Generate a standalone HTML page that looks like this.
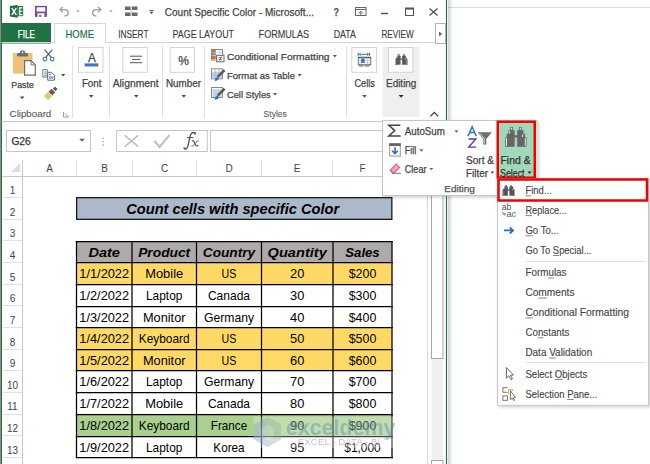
<!DOCTYPE html>
<html><head><meta charset="utf-8"><style>
html,body{margin:0;padding:0;background:#fff;overflow:hidden}
svg{display:block;font-family:"Liberation Sans",sans-serif}
</style></head><body>
<svg width="650" height="464" viewBox="0 0 650 464">
<defs>
<linearGradient id="shadowR" x1="0" x2="1" y1="0" y2="0"><stop offset="0" stop-color="#000" stop-opacity="0.18"/><stop offset="1" stop-color="#000" stop-opacity="0"/></linearGradient>
<filter id="sh" x="-10%" y="-10%" width="130%" height="130%"><feDropShadow dx="1.5" dy="1.5" stdDeviation="1.5" flood-color="#000" flood-opacity="0.18"/></filter>
</defs>
<rect x="0" y="0" width="650" height="464" fill="#ffffff" />
<rect x="0" y="0" width="1" height="464" fill="#8a8f86" />
<line x1="1.5" y1="0" x2="1.5" y2="464" stroke="#217346" stroke-width="1" />
<line x1="448" y1="7.5" x2="650" y2="7.5" stroke="#dcdcdc" stroke-width="1" />
<rect x="448" y="0" width="5" height="464" fill="url(#shadowR)" />
<line x1="446.5" y1="0" x2="446.5" y2="464" stroke="#217346" stroke-width="1.2" />
<path d="M9.9,6 L17.8,4.9 L17.8,17.7 L9.9,16.6 Z" fill="#1e7145" />
<rect x="17.8" y="6" width="5.4" height="10.2" fill="#2a7d50" />
<rect x="19.2" y="7.2" width="1.1" height="8" fill="#ffffff" />
<rect x="19.2" y="7.4" width="3.2" height="1.0" fill="#ffffff" />
<rect x="19.2" y="10.8" width="3.2" height="1.0" fill="#ffffff" />
<rect x="19.2" y="14.2" width="3.2" height="1.0" fill="#ffffff" />
<path d="M11.8,8.2 L16.3,14.8 M16.3,8.2 L11.8,14.8" fill="none" stroke="#fff" stroke-width="1.5" />
<rect x="35" y="5.9" width="11.9" height="11" fill="#7e3fa6" />
<rect x="36.6" y="7.3" width="8.7" height="4.3" fill="#ffffff" />
<rect x="37.4" y="13.2" width="7.1" height="3.7" fill="#ffffff" />
<rect x="39.2" y="14.9" width="1.9" height="2.0" fill="#7e3fa6" />
<path d="M61,9.6 L64.8,9.6 C67.6,9.6 68.2,11.4 68.2,12.8 C68.2,14.6 66.8,16 64.4,16" fill="none" stroke="#9a9a9a" stroke-width="1.3" />
<path d="M62.8,6.9 L60,9.6 L62.8,12.3" fill="none" stroke="#9a9a9a" stroke-width="1.3" />
<path d="M76.30,10.30 L79.70,10.30 L78.00,12.52 Z" fill="#a8a8a8" />
<path d="M99.8,9.6 L96,9.6 C93.2,9.6 92.6,11.4 92.6,12.8 C92.6,14.6 94,16 96.4,16" fill="none" stroke="#9a9a9a" stroke-width="1.3" />
<path d="M98,6.9 L100.8,9.6 L98,12.3" fill="none" stroke="#9a9a9a" stroke-width="1.3" />
<path d="M109.30,10.30 L112.70,10.30 L111.00,12.52 Z" fill="#a8a8a8" />
<rect x="125" y="6.5" width="5.5" height="3.5" fill="#6b6b6b" />
<rect x="132" y="6.5" width="5.5" height="3.5" fill="#6b6b6b" />
<rect x="125" y="12.5" width="5.5" height="3.5" fill="#6b6b6b" />
<rect x="132" y="12.5" width="5.5" height="3.5" fill="#6b6b6b" />
<line x1="131.2" y1="6" x2="131.2" y2="16.5" stroke="#9a9a9a" stroke-width="0.6" />
<line x1="149.5" y1="10.5" x2="153.5" y2="10.5" stroke="#555" stroke-width="1" />
<path d="M149.50,11.80 L153.50,11.80 L151.50,14.20 Z" fill="#555" />
<text x="164.8" y="16.2" font-size="11" fill="#444" stroke="#444" stroke-width="0.25" textLength="149.2" lengthAdjust="spacingAndGlyphs" >Count Specific Color - Microsoft...</text>
<text x="333.5" y="16.0" font-size="11" fill="#555" stroke="#555" stroke-width="0.25" textLength="5.5" lengthAdjust="spacingAndGlyphs" font-weight="bold">?</text>
<rect x="355.5" y="7.5" width="10.5" height="8" fill="none" stroke="#666" stroke-width="1" />
<line x1="355.5" y1="9.5" x2="366" y2="9.5" stroke="#666" stroke-width="1" />
<path d="M358.5,13.5 L360.8,11.3 L363,13.5 M360.8,11.3 L360.8,15.5" fill="none" stroke="#666" stroke-width="1" />
<line x1="381" y1="13.5" x2="388" y2="13.5" stroke="#555" stroke-width="1.5" />
<rect x="405.5" y="8" width="8" height="7.5" fill="none" stroke="#555" stroke-width="1" />
<line x1="405.5" y1="8.8" x2="413.5" y2="8.8" stroke="#555" stroke-width="1.6" />
<path d="M429.5,8.5 L437.5,15.5 M437.5,8.5 L429.5,15.5" fill="none" stroke="#555" stroke-width="1.4" />
<rect x="1.5" y="23" width="49.5" height="20.5" fill="#217346" />
<text x="17.7" y="37.5" font-size="10.2" fill="#ffffff" stroke="#ffffff" stroke-width="0.25" textLength="17.4" lengthAdjust="spacingAndGlyphs" >FILE</text>
<path d="M54.5,42.5 L54.5,23.5 L105.5,23.5 L105.5,42.5" fill="none" stroke="#d4d4d4" stroke-width="1" />
<text x="65.4" y="37.5" font-size="10.2" fill="#1d6b3c" stroke="#1d6b3c" stroke-width="0.12" textLength="28.6" lengthAdjust="spacingAndGlyphs" >HOME</text>
<text x="118.3" y="37.5" font-size="10.2" fill="#3a3a3a" stroke="#3a3a3a" stroke-width="0.12" textLength="30.2" lengthAdjust="spacingAndGlyphs" >INSERT</text>
<text x="172.5" y="37.5" font-size="10.2" fill="#3a3a3a" stroke="#3a3a3a" stroke-width="0.12" textLength="61.5" lengthAdjust="spacingAndGlyphs" >PAGE LAYOUT</text>
<text x="258.6" y="37.5" font-size="10.2" fill="#3a3a3a" stroke="#3a3a3a" stroke-width="0.12" textLength="50.4" lengthAdjust="spacingAndGlyphs" >FORMULAS</text>
<text x="333.7" y="37.5" font-size="10.2" fill="#3a3a3a" stroke="#3a3a3a" stroke-width="0.12" textLength="22.3" lengthAdjust="spacingAndGlyphs" >DATA</text>
<text x="381.4" y="37.5" font-size="10.2" fill="#3a3a3a" stroke="#3a3a3a" stroke-width="0.12" textLength="32.3" lengthAdjust="spacingAndGlyphs" >REVIEW</text>
<line x1="1.5" y1="42.5" x2="54.5" y2="42.5" stroke="#d4d4d4" stroke-width="1" />
<line x1="105.5" y1="42.5" x2="446" y2="42.5" stroke="#d4d4d4" stroke-width="1" />
<rect x="435.5" y="23.5" width="10" height="20" fill="#fff" stroke="#b4b4b4" stroke-width="1" />
<path d="M439,31.6 L442.2,34 L439,36.4 Z" fill="#666" />
<line x1="1.5" y1="121.5" x2="446" y2="121.5" stroke="#c8c8c8" stroke-width="1" />
<rect x="12.8" y="52.9" width="19.7" height="20.7" fill="#ebc27a" />
<rect x="17" y="53" width="11" height="3.4" rx="1" fill="#6d6d6d"/>
<rect x="20" y="50.6" width="5" height="3.5" rx="1.5" fill="#6d6d6d"/>
<circle cx="22.5" cy="52.4" r="0.8" fill="#fff"/>
<path d="M24.6,60.7 L31.1,60.7 L35.3,64.9 L35.3,75.1 L24.6,75.1 Z" fill="#fff" stroke="#6d6d6d" stroke-width="1.2" />
<path d="M31.1,60.7 L31.1,64.9 L35.3,64.9" fill="none" stroke="#6d6d6d" stroke-width="0.9" />
<text x="11.3" y="88.0" font-size="9" fill="#444" stroke="#444" stroke-width="0.25" textLength="22.5" lengthAdjust="spacingAndGlyphs" >Paste</text>
<path d="M19.90,96.60 L24.50,96.60 L22.20,99.18 Z" fill="#505050" />
<path d="M44.6,49.6 L51.3,57.3 M52.3,49.6 L45.6,57.3" fill="none" stroke="#555" stroke-width="1.1" />
<circle cx="44.9" cy="59.1" r="1.8" fill="none" stroke="#2e75b6" stroke-width="1.1"/>
<circle cx="52.1" cy="59.1" r="1.8" fill="none" stroke="#2e75b6" stroke-width="1.1"/>
<path d="M42.8,69.6 L47.3,69.6 L47.3,77.1 L42.8,77.1 Z" fill="#fff" stroke="#777" stroke-width="1" />
<line x1="44.2" y1="73.2" x2="46.5" y2="73.2" stroke="#2e75b6" stroke-width="0.9" />
<line x1="44.2" y1="75.3" x2="46.5" y2="75.3" stroke="#2e75b6" stroke-width="0.9" />
<line x1="44.2" y1="71.5" x2="46.5" y2="71.5" stroke="#9cc3e6" stroke-width="0.9" />
<path d="M47.7,72.3 L51.2,72.3 L54.4,75.2 L54.4,80.2 L47.7,80.2 Z" fill="#fff" stroke="#666" stroke-width="1" />
<line x1="49" y1="74.3" x2="51" y2="74.3" stroke="#2e75b6" stroke-width="0.9" />
<rect x="49" y="76.3" width="4.5" height="2.5" fill="#7fa9d8" />
<path d="M61.00,74.10 L65.20,74.10 L63.10,76.56 Z" fill="#444" />
<g transform="translate(46,98) rotate(-45)"><rect x="0" y="-3" width="5.6" height="6" fill="#ebc075"/><rect x="6.1" y="-2.7" width="4.4" height="5.4" fill="#606060"/><rect x="11.4" y="-1.8" width="3.2" height="3.6" fill="#606060"/></g>
<text x="9.6" y="117.0" font-size="9.2" fill="#5a5a5a" stroke="#5a5a5a" stroke-width="0.1" textLength="41.7" lengthAdjust="spacingAndGlyphs" >Clipboard</text>
<path d="M63.5,112 L63.5,117 L68.5,117" fill="none" stroke="#888" stroke-width="0.8" />
<path d="M65,113.5 L68.5,117" fill="none" stroke="#888" stroke-width="0.8" />
<line x1="72.5" y1="46" x2="72.5" y2="118" stroke="#e1e1e1" stroke-width="1" />
<rect x="78.5" y="47.5" width="24.5" height="24.8" fill="#fff" stroke="#d4d4d4" stroke-width="1" />
<text x="88.0" y="62.3" font-size="12.4" fill="#444" stroke="#444" stroke-width="0.25" textLength="7.8" lengthAdjust="spacingAndGlyphs" >A</text>
<rect x="84.7" y="63.4" width="13.6" height="3.1" fill="#3a78c4" />
<text x="81.9" y="86.6" font-size="10.4" fill="#444" stroke="#444" stroke-width="0.25" textLength="19.6" lengthAdjust="spacingAndGlyphs" >Font</text>
<path d="M88.90,95.10 L93.50,95.10 L91.20,97.68 Z" fill="#505050" />
<line x1="109.5" y1="46" x2="109.5" y2="118" stroke="#e1e1e1" stroke-width="1" />
<rect x="122.8" y="47.5" width="24.5" height="24.8" fill="#fff" stroke="#d4d4d4" stroke-width="1" />
<line x1="130" y1="56.2" x2="142.2" y2="56.2" stroke="#555" stroke-width="1" />
<line x1="132" y1="59.4" x2="140.2" y2="59.4" stroke="#555" stroke-width="1" />
<line x1="130" y1="62.7" x2="142.2" y2="62.7" stroke="#555" stroke-width="1" />
<text x="112.7" y="86.6" font-size="10.4" fill="#444" stroke="#444" stroke-width="0.25" textLength="45.9" lengthAdjust="spacingAndGlyphs" >Alignment</text>
<path d="M134.00,95.10 L138.60,95.10 L136.30,97.68 Z" fill="#505050" />
<line x1="162.5" y1="46" x2="162.5" y2="118" stroke="#e1e1e1" stroke-width="1" />
<rect x="170.2" y="47.5" width="24.3" height="24.8" fill="#fff" stroke="#d4d4d4" stroke-width="1" />
<text x="178.3" y="64.9" font-size="12.8" fill="#444" stroke="#444" stroke-width="0.25" textLength="10.7" lengthAdjust="spacingAndGlyphs" >%</text>
<text x="165.9" y="86.6" font-size="10.4" fill="#444" stroke="#444" stroke-width="0.25" textLength="35.1" lengthAdjust="spacingAndGlyphs" >Number</text>
<path d="M181.50,95.10 L186.10,95.10 L183.80,97.68 Z" fill="#505050" />
<line x1="204.5" y1="46" x2="204.5" y2="118" stroke="#e1e1e1" stroke-width="1" />
<rect x="211.5" y="49.5" width="11" height="10.5" fill="#fff" stroke="#8a8a8a" stroke-width="1" />
<rect x="212" y="50" width="3.8" height="2.6" fill="#e46c0a" />
<rect x="212" y="52.9" width="3.8" height="2.6" fill="#5b9bd5" />
<rect x="212" y="55.8" width="3.8" height="3.2" fill="#e46c0a" />
<line x1="216.5" y1="52.7" x2="222.5" y2="52.7" stroke="#ccc" stroke-width="0.7" />
<line x1="219.5" y1="49.5" x2="219.5" y2="55" stroke="#ccc" stroke-width="0.7" />
<rect x="216.6" y="55.3" width="7.4" height="6.5" fill="#fff" stroke="#666" stroke-width="1" />
<line x1="218.6" y1="57.6" x2="222.2" y2="57.6" stroke="#555" stroke-width="0.8" />
<line x1="218.6" y1="59.6" x2="222.2" y2="59.6" stroke="#555" stroke-width="0.8" />
<line x1="221.4" y1="56.6" x2="219.4" y2="60.8" stroke="#555" stroke-width="0.8" />
<text x="227.0" y="60.0" font-size="9.5" fill="#444" stroke="#444" stroke-width="0.25" textLength="102.5" lengthAdjust="spacingAndGlyphs" >Conditional Formatting</text>
<path d="M332.80,55.00 L336.80,55.00 L334.80,57.40 Z" fill="#555" />
<rect x="211.5" y="68.8" width="11" height="10" fill="#fff" stroke="#8a8a8a" stroke-width="1" />
<rect x="212" y="72.3" width="10" height="6" fill="#bdd7ee" />
<line x1="215.2" y1="68.8" x2="215.2" y2="78.8" stroke="#aaa" stroke-width="0.6" />
<line x1="218.8" y1="68.8" x2="218.8" y2="78.8" stroke="#aaa" stroke-width="0.6" />
<line x1="211.5" y1="72.1" x2="222.5" y2="72.1" stroke="#aaa" stroke-width="0.6" />
<line x1="211.5" y1="75.3" x2="222.5" y2="75.3" stroke="#aaa" stroke-width="0.6" />
<path d="M224.6,70.1 L217.6,76.89999999999999" fill="none" stroke="#5a5a5a" stroke-width="2.6" />
<path d="M214.6,80.89999999999999 C215,78.5 216,76.89999999999999 217.6,77.2 L218.8,78.3 C219,80.1 216.8,80.89999999999999 214.6,80.89999999999999 Z" fill="#2e75b6" />
<text x="227.0" y="78.9" font-size="9.8" fill="#444" stroke="#444" stroke-width="0.25" textLength="68.0" lengthAdjust="spacingAndGlyphs" >Format as Table</text>
<path d="M297.60,74.10 L301.60,74.10 L299.60,76.50 Z" fill="#555" />
<rect x="211.5" y="87.5" width="11" height="10" fill="#fff" stroke="#8a8a8a" stroke-width="1" />
<rect x="212.5" y="90.2" width="9" height="6.8" fill="#bdd7ee" />
<line x1="211.5" y1="89.8" x2="222.5" y2="89.8" stroke="#aaa" stroke-width="0.6" />
<path d="M224.6,88.8 L217.6,95.6" fill="none" stroke="#5a5a5a" stroke-width="2.6" />
<path d="M214.6,99.6 C215,97.2 216,95.6 217.6,95.9 L218.8,97 C219,98.8 216.8,99.6 214.6,99.6 Z" fill="#2e75b6" />
<text x="227.0" y="98.4" font-size="9.5" fill="#444" stroke="#444" stroke-width="0.25" textLength="43.7" lengthAdjust="spacingAndGlyphs" >Cell Styles</text>
<path d="M273.10,93.10 L277.10,93.10 L275.10,95.50 Z" fill="#555" />
<text x="263.6" y="117.2" font-size="9.2" fill="#5a5a5a" stroke="#5a5a5a" stroke-width="0.1" textLength="23.2" lengthAdjust="spacingAndGlyphs" >Styles</text>
<line x1="346.5" y1="46" x2="346.5" y2="118" stroke="#e1e1e1" stroke-width="1" />
<rect x="351.8" y="47.5" width="24.8" height="24.8" fill="#fff" stroke="#d4d4d4" stroke-width="1" />
<path d="M358.2,52.6 L358.2,56 M369.4,52.6 L369.4,56 M359.2,54.3 L368.4,54.3" fill="none" stroke="#2e75b6" stroke-width="1" />
<path d="M360.6,53 L359.2,54.3 L360.6,55.6 M367,53 L368.4,54.3 L367,55.6" fill="none" stroke="#2e75b6" stroke-width="0.9" />
<rect x="358.3" y="57.3" width="12.4" height="7.4" fill="#fff" stroke="#666" stroke-width="1" />
<line x1="358.3" y1="57.6" x2="370.7" y2="57.6" stroke="#555" stroke-width="1.4" />
<line x1="358.3" y1="60.4" x2="370.7" y2="60.4" stroke="#bbb" stroke-width="0.7" />
<line x1="358.3" y1="62.6" x2="370.7" y2="62.6" stroke="#bbb" stroke-width="0.7" />
<line x1="361.3" y1="57.3" x2="361.3" y2="64.7" stroke="#bbb" stroke-width="0.7" />
<line x1="364.5" y1="57.3" x2="364.5" y2="64.7" stroke="#bbb" stroke-width="0.7" />
<line x1="367.6" y1="57.3" x2="367.6" y2="64.7" stroke="#bbb" stroke-width="0.7" />
<rect x="361.2" y="58.6" width="3.2" height="4.2" fill="#2e75b6" />
<rect x="358.6" y="65.2" width="5" height="1.4" rx="0.7" fill="#777"/>
<rect x="364.6" y="65.2" width="5" height="1.4" rx="0.7" fill="#777"/>
<text x="354.4" y="86.6" font-size="10.4" fill="#444" stroke="#444" stroke-width="0.25" textLength="20.6" lengthAdjust="spacingAndGlyphs" >Cells</text>
<path d="M362.20,95.10 L366.80,95.10 L364.50,97.68 Z" fill="#505050" />
<rect x="382.6" y="47" width="36.8" height="70" fill="#eef0f0" />
<rect x="388.5" y="47.5" width="24.5" height="24.8" fill="#fbfbfb" stroke="#d2d2d2" stroke-width="1" />
<g transform="translate(395,54.1) scale(0.5991,0.5408)"><path fill="#5a5a5a" d="M4.8,0 H7.6 V3.1 H9.3 V19.6 H0 V10.1 H1.4 V6.7 H3.1 V3.1 H4.8 Z M16.4,0 H13.6 V3.1 H11.9 V19.6 H21.2 V10.1 H19.8 V6.7 H18.1 V3.1 H16.4 Z M9.3,8.1 H11.9 V10.4 H9.3 Z"/><path fill="#ffffff" opacity="0.85" d="M0.7,11 H1.7 V18.6 H0.7 Z M3.8,3.8 H4.8 V6.4 H3.8 Z M5.6,0.7 H6.8 V2.6 H5.6 Z M19.5,11 H20.5 V18.6 H19.5 Z M16.8,7.2 H17.8 V9.8 H16.8 Z M14.4,0.7 H15.6 V2.6 H14.4 Z"/></g>
<text x="386.0" y="86.6" font-size="10.4" fill="#444" stroke="#444" stroke-width="0.25" textLength="30.4" lengthAdjust="spacingAndGlyphs" >Editing</text>
<path d="M398.60,95.10 L403.60,95.10 L401.10,97.80 Z" fill="#2a2a2a" />
<path d="M430.5,116.2 L434.3,112.4 L438.1,116.2" fill="none" stroke="#444" stroke-width="1.3" />
<rect x="6.5" y="130.5" width="84" height="21" fill="#fff" stroke="#c6c6c6" stroke-width="1" />
<text x="11.4" y="145.2" font-size="11" fill="#333" stroke="#333" stroke-width="0.25" textLength="19.4" lengthAdjust="spacingAndGlyphs" >G26</text>
<path d="M79.20,138.80 L84.80,138.80 L82.00,141.68 Z" fill="#666" />
<rect x="102.5" y="137.5" width="1.2" height="1.2" fill="#888" />
<rect x="102.5" y="141" width="1.2" height="1.2" fill="#888" />
<rect x="102.5" y="144.5" width="1.2" height="1.2" fill="#888" />
<rect x="116.5" y="130.5" width="90.8" height="21" fill="#fff" stroke="#c6c6c6" stroke-width="1" />
<path d="M124.8,135.4 L138.2,146.6 M138.2,135.4 L124.8,146.6" fill="none" stroke="#c0c0c0" stroke-width="1.7" />
<path d="M154.5,141 L159.5,147 L169.5,135" fill="none" stroke="#c4c4c4" stroke-width="2.2" />
<path d="M195.4,133.8 C194.8,132.3 192.6,132 191.3,133.6 C190.6,134.5 190.2,136 189.8,137.6 L188.1,145.3 C187.6,147.8 186.2,149.4 184.5,148.9" fill="none" stroke="#555" stroke-width="1.35" />
<circle cx="195.1" cy="133.6" r="1.05" fill="#555"/>
<circle cx="184.4" cy="148.2" r="1.05" fill="#555"/>
<line x1="186.8" y1="137.6" x2="193.4" y2="137.6" stroke="#555" stroke-width="1.0" />
<path d="M191.8,141 C193,140.2 193.8,140.6 194.3,142 L195.6,145 C196.1,146.2 197.3,146.3 198.4,145.2" fill="none" stroke="#555" stroke-width="1.15" />
<path d="M198.8,140.6 C197.6,140.8 196.8,141.5 195.8,142.6 L193.8,145 C193.2,145.8 192.4,146.4 191.4,146" fill="none" stroke="#555" stroke-width="0.95" />
<rect x="210.5" y="130.5" width="240" height="21" fill="#fff" stroke="#c6c6c6" stroke-width="1" />
<rect x="2" y="160" width="444" height="16" fill="#fff" />
<line x1="2" y1="176.5" x2="427" y2="176.5" stroke="#c8c8c8" stroke-width="1" />
<line x1="22.5" y1="160" x2="22.5" y2="464" stroke="#c8c8c8" stroke-width="1" />
<path d="M11,172 L20,163 L20,172 Z" fill="#dcdcdc" />
<text x="49.5" y="172" font-size="10" fill="#444" text-anchor="middle">A</text>
<line x1="76.5" y1="160" x2="76.5" y2="176" stroke="#e1e1e1" stroke-width="1" />
<text x="104.5" y="172" font-size="10" fill="#444" text-anchor="middle">B</text>
<line x1="132.5" y1="160" x2="132.5" y2="176" stroke="#e1e1e1" stroke-width="1" />
<text x="164.5" y="172" font-size="10" fill="#444" text-anchor="middle">C</text>
<line x1="196.5" y1="160" x2="196.5" y2="176" stroke="#e1e1e1" stroke-width="1" />
<text x="229.0" y="172" font-size="10" fill="#444" text-anchor="middle">D</text>
<line x1="261.5" y1="160" x2="261.5" y2="176" stroke="#e1e1e1" stroke-width="1" />
<text x="297.0" y="172" font-size="10" fill="#444" text-anchor="middle">E</text>
<line x1="332.5" y1="160" x2="332.5" y2="176" stroke="#e1e1e1" stroke-width="1" />
<text x="362.5" y="172" font-size="10" fill="#444" text-anchor="middle">F</text>
<line x1="392.5" y1="160" x2="392.5" y2="176" stroke="#e1e1e1" stroke-width="1" />
<line x1="3" y1="197.5" x2="22" y2="197.5" stroke="#e1e1e1" stroke-width="1" />
<text x="12.5" y="194.0" font-size="10" fill="#444" text-anchor="middle">1</text>
<line x1="3" y1="219.5" x2="22" y2="219.5" stroke="#e1e1e1" stroke-width="1" />
<text x="12.5" y="215.6" font-size="10" fill="#444" text-anchor="middle">2</text>
<line x1="3" y1="240.5" x2="22" y2="240.5" stroke="#e1e1e1" stroke-width="1" />
<text x="12.5" y="237.3" font-size="10" fill="#444" text-anchor="middle">3</text>
<line x1="3" y1="262.5" x2="22" y2="262.5" stroke="#e1e1e1" stroke-width="1" />
<text x="12.5" y="258.9" font-size="10" fill="#444" text-anchor="middle">4</text>
<line x1="3" y1="284.5" x2="22" y2="284.5" stroke="#e1e1e1" stroke-width="1" />
<text x="12.5" y="280.6" font-size="10" fill="#444" text-anchor="middle">5</text>
<line x1="3" y1="305.5" x2="22" y2="305.5" stroke="#e1e1e1" stroke-width="1" />
<text x="12.5" y="302.2" font-size="10" fill="#444" text-anchor="middle">6</text>
<line x1="3" y1="327.5" x2="22" y2="327.5" stroke="#e1e1e1" stroke-width="1" />
<text x="12.5" y="323.8" font-size="10" fill="#444" text-anchor="middle">7</text>
<line x1="3" y1="349.5" x2="22" y2="349.5" stroke="#e1e1e1" stroke-width="1" />
<text x="12.5" y="345.5" font-size="10" fill="#444" text-anchor="middle">8</text>
<line x1="3" y1="370.5" x2="22" y2="370.5" stroke="#e1e1e1" stroke-width="1" />
<text x="12.5" y="367.1" font-size="10" fill="#444" text-anchor="middle">9</text>
<line x1="3" y1="392.5" x2="22" y2="392.5" stroke="#e1e1e1" stroke-width="1" />
<text x="12.5" y="388.8" font-size="10" fill="#444" text-anchor="middle">10</text>
<line x1="3" y1="414.5" x2="22" y2="414.5" stroke="#e1e1e1" stroke-width="1" />
<text x="12.5" y="410.4" font-size="10" fill="#444" text-anchor="middle">11</text>
<line x1="3" y1="435.5" x2="22" y2="435.5" stroke="#e1e1e1" stroke-width="1" />
<text x="12.5" y="432.0" font-size="10" fill="#444" text-anchor="middle">12</text>
<line x1="3" y1="457.5" x2="22" y2="457.5" stroke="#e1e1e1" stroke-width="1" />
<text x="12.5" y="453.7" font-size="10" fill="#444" text-anchor="middle">13</text>
<line x1="427.5" y1="176" x2="427.5" y2="464" stroke="#d8d8d8" stroke-width="1" />
<rect x="431.5" y="176" width="11.5" height="284" fill="#f0f0f0" />
<rect x="431.5" y="195" width="11.5" height="163.5" fill="#fff" stroke="#a6a6a6" stroke-width="1" />
<rect x="431.5" y="460.5" width="11.5" height="10" fill="#fff" stroke="#a6a6a6" stroke-width="1" />
<rect x="76" y="197" width="316.5" height="23" fill="#1a1a1a" />
<rect x="77.3" y="198.3" width="313.9" height="20.4" fill="#acb9ca" />
<text x="126.2" y="213.5" font-size="14.6" font-weight="bold" font-style="italic" fill="#000" textLength="213" lengthAdjust="spacingAndGlyphs">Count cells with specific Color</text>
<rect x="76.5" y="241.5" width="315.5" height="21" fill="#aeaaaa" />
<text x="104.2" y="256.9" font-size="13.2" font-weight="bold" font-style="italic" fill="#000" text-anchor="middle" textLength="31.6" lengthAdjust="spacingAndGlyphs">Date</text>
<text x="164.2" y="256.9" font-size="13.2" font-weight="bold" font-style="italic" fill="#000" text-anchor="middle" textLength="52.0" lengthAdjust="spacingAndGlyphs">Product</text>
<text x="229.0" y="256.9" font-size="13.2" font-weight="bold" font-style="italic" fill="#000" text-anchor="middle" textLength="52.3" lengthAdjust="spacingAndGlyphs">Country</text>
<text x="297.2" y="256.9" font-size="13.2" font-weight="bold" font-style="italic" fill="#000" text-anchor="middle" textLength="59.2" lengthAdjust="spacingAndGlyphs">Quantity</text>
<text x="362.5" y="256.9" font-size="13.2" font-weight="bold" font-style="italic" fill="#000" text-anchor="middle" textLength="34.4" lengthAdjust="spacingAndGlyphs">Sales</text>
<rect x="76.5" y="262.5" width="315.5" height="22" fill="#ffd966" />
<text x="104.2" y="278.2" font-size="12.9" fill="#000" text-anchor="middle" textLength="49.8" lengthAdjust="spacingAndGlyphs">1/1/2022</text>
<text x="164.2" y="278.2" font-size="12.9" fill="#000" text-anchor="middle" textLength="38.0" lengthAdjust="spacingAndGlyphs">Mobile</text>
<text x="229.0" y="278.2" font-size="12.9" fill="#000" text-anchor="middle" textLength="14.8" lengthAdjust="spacingAndGlyphs">US</text>
<text x="297.2" y="278.2" font-size="12.9" fill="#000" text-anchor="middle" textLength="14.3" lengthAdjust="spacingAndGlyphs">20</text>
<text x="362.5" y="278.2" font-size="12.9" fill="#000" text-anchor="middle" textLength="27.6" lengthAdjust="spacingAndGlyphs">$200</text>
<rect x="76.5" y="284.5" width="315.5" height="22" fill="#ffffff" />
<text x="104.2" y="300.2" font-size="12.9" fill="#000" text-anchor="middle" textLength="49.8" lengthAdjust="spacingAndGlyphs">1/2/2022</text>
<text x="164.2" y="300.2" font-size="12.9" fill="#000" text-anchor="middle" textLength="36.4" lengthAdjust="spacingAndGlyphs">Laptop</text>
<text x="229.0" y="300.2" font-size="12.9" fill="#000" text-anchor="middle" textLength="42.1" lengthAdjust="spacingAndGlyphs">Canada</text>
<text x="297.2" y="300.2" font-size="12.9" fill="#000" text-anchor="middle" textLength="14.3" lengthAdjust="spacingAndGlyphs">30</text>
<text x="362.5" y="300.2" font-size="12.9" fill="#000" text-anchor="middle" textLength="27.6" lengthAdjust="spacingAndGlyphs">$300</text>
<rect x="76.5" y="306.5" width="315.5" height="21" fill="#ffffff" />
<text x="104.2" y="322.2" font-size="12.9" fill="#000" text-anchor="middle" textLength="49.8" lengthAdjust="spacingAndGlyphs">1/3/2022</text>
<text x="164.2" y="322.2" font-size="12.9" fill="#000" text-anchor="middle" textLength="42.6" lengthAdjust="spacingAndGlyphs">Monitor</text>
<text x="229.0" y="322.2" font-size="12.9" fill="#000" text-anchor="middle" textLength="50.0" lengthAdjust="spacingAndGlyphs">Germany</text>
<text x="297.2" y="322.2" font-size="12.9" fill="#000" text-anchor="middle" textLength="14.3" lengthAdjust="spacingAndGlyphs">40</text>
<text x="362.5" y="322.2" font-size="12.9" fill="#000" text-anchor="middle" textLength="27.6" lengthAdjust="spacingAndGlyphs">$400</text>
<rect x="76.5" y="327.5" width="315.5" height="22" fill="#ffd966" />
<text x="104.2" y="343.2" font-size="12.9" fill="#000" text-anchor="middle" textLength="49.8" lengthAdjust="spacingAndGlyphs">1/4/2022</text>
<text x="164.2" y="343.2" font-size="12.9" fill="#000" text-anchor="middle" textLength="50.9" lengthAdjust="spacingAndGlyphs">Keyboard</text>
<text x="229.0" y="343.2" font-size="12.9" fill="#000" text-anchor="middle" textLength="14.8" lengthAdjust="spacingAndGlyphs">US</text>
<text x="297.2" y="343.2" font-size="12.9" fill="#000" text-anchor="middle" textLength="14.3" lengthAdjust="spacingAndGlyphs">50</text>
<text x="362.5" y="343.2" font-size="12.9" fill="#000" text-anchor="middle" textLength="27.6" lengthAdjust="spacingAndGlyphs">$500</text>
<rect x="76.5" y="349.5" width="315.5" height="21" fill="#ffd966" />
<text x="104.2" y="365.2" font-size="12.9" fill="#000" text-anchor="middle" textLength="49.8" lengthAdjust="spacingAndGlyphs">1/5/2022</text>
<text x="164.2" y="365.2" font-size="12.9" fill="#000" text-anchor="middle" textLength="42.6" lengthAdjust="spacingAndGlyphs">Monitor</text>
<text x="229.0" y="365.2" font-size="12.9" fill="#000" text-anchor="middle" textLength="14.8" lengthAdjust="spacingAndGlyphs">US</text>
<text x="297.2" y="365.2" font-size="12.9" fill="#000" text-anchor="middle" textLength="14.3" lengthAdjust="spacingAndGlyphs">60</text>
<text x="362.5" y="365.2" font-size="12.9" fill="#000" text-anchor="middle" textLength="27.6" lengthAdjust="spacingAndGlyphs">$600</text>
<rect x="76.5" y="370.5" width="315.5" height="22" fill="#ffffff" />
<text x="104.2" y="386.2" font-size="12.9" fill="#000" text-anchor="middle" textLength="49.8" lengthAdjust="spacingAndGlyphs">1/6/2022</text>
<text x="164.2" y="386.2" font-size="12.9" fill="#000" text-anchor="middle" textLength="36.4" lengthAdjust="spacingAndGlyphs">Laptop</text>
<text x="229.0" y="386.2" font-size="12.9" fill="#000" text-anchor="middle" textLength="50.0" lengthAdjust="spacingAndGlyphs">Germany</text>
<text x="297.2" y="386.2" font-size="12.9" fill="#000" text-anchor="middle" textLength="14.3" lengthAdjust="spacingAndGlyphs">70</text>
<text x="362.5" y="386.2" font-size="12.9" fill="#000" text-anchor="middle" textLength="27.6" lengthAdjust="spacingAndGlyphs">$700</text>
<rect x="76.5" y="392.5" width="315.5" height="22" fill="#ffffff" />
<text x="104.2" y="408.2" font-size="12.9" fill="#000" text-anchor="middle" textLength="49.8" lengthAdjust="spacingAndGlyphs">1/7/2022</text>
<text x="164.2" y="408.2" font-size="12.9" fill="#000" text-anchor="middle" textLength="38.0" lengthAdjust="spacingAndGlyphs">Mobile</text>
<text x="229.0" y="408.2" font-size="12.9" fill="#000" text-anchor="middle" textLength="42.1" lengthAdjust="spacingAndGlyphs">Canada</text>
<text x="297.2" y="408.2" font-size="12.9" fill="#000" text-anchor="middle" textLength="14.3" lengthAdjust="spacingAndGlyphs">80</text>
<text x="362.5" y="408.2" font-size="12.9" fill="#000" text-anchor="middle" textLength="27.6" lengthAdjust="spacingAndGlyphs">$800</text>
<rect x="76.5" y="414.5" width="315.5" height="22" fill="#a9d08e" />
<text x="104.2" y="430.2" font-size="12.9" fill="#000" text-anchor="middle" textLength="49.8" lengthAdjust="spacingAndGlyphs">1/8/2022</text>
<text x="164.2" y="430.2" font-size="12.9" fill="#000" text-anchor="middle" textLength="50.9" lengthAdjust="spacingAndGlyphs">Keyboard</text>
<text x="229.0" y="430.2" font-size="12.9" fill="#000" text-anchor="middle" textLength="36.3" lengthAdjust="spacingAndGlyphs">France</text>
<text x="297.2" y="430.2" font-size="12.9" fill="#000" text-anchor="middle" textLength="14.3" lengthAdjust="spacingAndGlyphs">90</text>
<text x="362.5" y="430.2" font-size="12.9" fill="#000" text-anchor="middle" textLength="27.6" lengthAdjust="spacingAndGlyphs">$900</text>
<rect x="76.5" y="436.5" width="315.5" height="21" fill="#ffffff" />
<text x="104.2" y="452.2" font-size="12.9" fill="#000" text-anchor="middle" textLength="49.8" lengthAdjust="spacingAndGlyphs">1/9/2022</text>
<text x="164.2" y="452.2" font-size="12.9" fill="#000" text-anchor="middle" textLength="36.4" lengthAdjust="spacingAndGlyphs">Laptop</text>
<text x="229.0" y="452.2" font-size="12.9" fill="#000" text-anchor="middle" textLength="31.3" lengthAdjust="spacingAndGlyphs">Korea</text>
<text x="297.2" y="452.2" font-size="12.9" fill="#000" text-anchor="middle" textLength="14.3" lengthAdjust="spacingAndGlyphs">95</text>
<text x="362.5" y="452.2" font-size="12.9" fill="#000" text-anchor="middle" textLength="36.3" lengthAdjust="spacingAndGlyphs">$1,000</text>
<line x1="75.8" y1="241.5" x2="392.8" y2="241.5" stroke="#000" stroke-width="1.25" />
<line x1="75.8" y1="262.5" x2="392.8" y2="262.5" stroke="#000" stroke-width="1.25" />
<line x1="75.8" y1="284.5" x2="392.8" y2="284.5" stroke="#000" stroke-width="1.25" />
<line x1="75.8" y1="306.5" x2="392.8" y2="306.5" stroke="#000" stroke-width="1.25" />
<line x1="75.8" y1="327.5" x2="392.8" y2="327.5" stroke="#000" stroke-width="1.25" />
<line x1="75.8" y1="349.5" x2="392.8" y2="349.5" stroke="#000" stroke-width="1.25" />
<line x1="75.8" y1="370.5" x2="392.8" y2="370.5" stroke="#000" stroke-width="1.25" />
<line x1="75.8" y1="392.5" x2="392.8" y2="392.5" stroke="#000" stroke-width="1.25" />
<line x1="75.8" y1="414.5" x2="392.8" y2="414.5" stroke="#000" stroke-width="1.25" />
<line x1="75.8" y1="436.5" x2="392.8" y2="436.5" stroke="#000" stroke-width="1.25" />
<line x1="75.8" y1="457.5" x2="392.8" y2="457.5" stroke="#000" stroke-width="1.25" />
<line x1="76.5" y1="241" x2="76.5" y2="458.2" stroke="#000" stroke-width="1.25" />
<line x1="132" y1="241" x2="132" y2="458.2" stroke="#000" stroke-width="1.25" />
<line x1="196.5" y1="241" x2="196.5" y2="458.2" stroke="#000" stroke-width="1.25" />
<line x1="261.5" y1="241" x2="261.5" y2="458.2" stroke="#000" stroke-width="1.25" />
<line x1="333" y1="241" x2="333" y2="458.2" stroke="#000" stroke-width="1.25" />
<line x1="392" y1="241" x2="392" y2="458.2" stroke="#000" stroke-width="1.25" />
<rect x="253.5" y="416.5" width="144" height="31.5" fill="#ffffff" opacity="0.28"/>
<g opacity="0.38">
<path d="M267.3,417 L281,424.5 L281,439.5 L267.3,447 L253.6,439.5 L253.6,424.5 Z" fill="#7f9fc0" />
<path d="M267.3,417 L281,424.5 L281,439.5 L267.3,447 Z" fill="#90ae9c" />
<path d="M267.3,425 L274,428.8 L274,436.5 L267.3,440.3 L260.6,436.5 L260.6,428.8 Z" fill="#ffffff" opacity="0.35"/>
</g>
<text x="286" y="435.3" font-size="22" fill="#5a88ae" opacity="0.42" textLength="109.5" lengthAdjust="spacingAndGlyphs" font-weight="bold">exceldemy</text>
<text x="297.8" y="445" font-size="8.6" fill="#8a8a8a" opacity="0.5" textLength="82.5" lengthAdjust="spacingAndGlyphs">EXCEL  -  DATA  -  BI</text>
<g filter="url(#sh)">
<rect x="382.5" y="120.5" width="154.5" height="75" fill="#fff" stroke="#c6c6c6" stroke-width="1" />
</g>
<path d="M400.3,125.3 L388.8,125.3 L394.8,130.6 L388.8,135.9 L400.6,135.9" fill="none" stroke="#444" stroke-width="1.5" stroke-linejoin="miter"/>
<text x="404.7" y="134.6" font-size="10" fill="#444" stroke="#444" stroke-width="0.25" textLength="40.3" lengthAdjust="spacingAndGlyphs" >AutoSum</text>
<path d="M454.40,130.20 L458.60,130.20 L456.50,132.66 Z" fill="#666" />
<rect x="389.7" y="143.8" width="10.6" height="12.3" fill="#fff" stroke="#999" stroke-width="1" />
<rect x="389.2" y="143.3" width="11.6" height="2.7" fill="#666" />
<path d="M395,147.2 L395,153.5 M392.2,150.8 L395,153.6 L397.8,150.8" fill="none" stroke="#2b6cc4" stroke-width="1.6" />
<text x="404.7" y="153.9" font-size="10" fill="#444" stroke="#444" stroke-width="0.25" textLength="11.6" lengthAdjust="spacingAndGlyphs" >Fill</text>
<path d="M419.30,149.20 L423.50,149.20 L421.40,151.66 Z" fill="#666" />
<path d="M390.2,170.2 L396.3,164.1 L399.6,167.4 L393.5,173.5 L393,173.5 Z" fill="#f4a6b4" stroke="#e0607a" stroke-width="1.2" />
<path d="M390.2,170.2 L393.5,173.5" fill="none" stroke="#e0607a" stroke-width="1.2" />
<line x1="392.5" y1="173.3" x2="400.8" y2="173.3" stroke="#666" stroke-width="0.9" />
<text x="404.7" y="173.0" font-size="10" fill="#444" stroke="#444" stroke-width="0.25" textLength="21.9" lengthAdjust="spacingAndGlyphs" >Clear</text>
<path d="M429.20,167.90 L433.40,167.90 L431.30,170.36 Z" fill="#666" />
<path d="M467.9,136.2 L472.1,126.8 L476.3,136.2 M469.6,132.6 L474.6,132.6" fill="none" stroke="#2e75b6" stroke-width="1.5" />
<path d="M468.6,139 L475.8,139 L468.8,147.1 L476.1,147.1" fill="none" stroke="#7030a0" stroke-width="1.4" />
<path d="M477.5,132.2 L491.8,132.2 L486.3,138.9 L486.3,144.6 L483.1,144.6 L483.1,138.9 Z" fill="#6e6e6e" />
<path d="M479.6,133.3 L484.1,138.4 L484.1,143.8" fill="none" stroke="#f2f2f2" stroke-width="0.9" />
<text x="466.0" y="163.6" font-size="10" fill="#444" stroke="#444" stroke-width="0.25" textLength="28.0" lengthAdjust="spacingAndGlyphs" >Sort &amp;</text>
<text x="466.0" y="176.7" font-size="10" fill="#444" stroke="#444" stroke-width="0.25" textLength="22.0" lengthAdjust="spacingAndGlyphs" >Filter</text>
<path d="M490.60,171.40 L494.20,171.40 L492.40,173.68 Z" fill="#444" />
<rect x="498" y="122" width="36.5" height="55.5" fill="#a0d8b8" />
<rect x="497.75" y="121.75" width="37" height="56" fill="none" stroke="#f00000" stroke-width="2.5" />
<g transform="translate(505.3,127.1) scale(1.0000,1.0000)"><path fill="#666666" d="M4.8,0 H7.6 V3.1 H9.3 V19.6 H0 V10.1 H1.4 V6.7 H3.1 V3.1 H4.8 Z M16.4,0 H13.6 V3.1 H11.9 V19.6 H21.2 V10.1 H19.8 V6.7 H18.1 V3.1 H16.4 Z M9.3,8.1 H11.9 V10.4 H9.3 Z"/><path fill="#ffffff" opacity="0.85" d="M0.7,11 H1.7 V18.6 H0.7 Z M3.8,3.8 H4.8 V6.4 H3.8 Z M5.6,0.7 H6.8 V2.6 H5.6 Z M19.5,11 H20.5 V18.6 H19.5 Z M16.8,7.2 H17.8 V9.8 H16.8 Z M14.4,0.7 H15.6 V2.6 H14.4 Z"/></g>
<text x="500.5" y="163.6" font-size="10" fill="#333" stroke="#333" stroke-width="0.25" textLength="30.1" lengthAdjust="spacingAndGlyphs" >Find &amp;</text>
<text x="500.0" y="176.7" font-size="10" fill="#333" stroke="#333" stroke-width="0.25" textLength="24.5" lengthAdjust="spacingAndGlyphs" >Select</text>
<path d="M527.60,171.60 L531.60,171.60 L529.60,174.00 Z" fill="#222" />
<text x="444.3" y="192.2" font-size="9.3" fill="#555" stroke="#555" stroke-width="0.25" textLength="30.6" lengthAdjust="spacingAndGlyphs" >Editing</text>
<g filter="url(#sh)">
<rect x="497.5" y="178.5" width="151" height="226.8" fill="#fff" stroke="#c6c6c6" stroke-width="1" />
</g>
<rect x="498.5" y="179.5" width="148.5" height="21" fill="none" stroke="#f00000" stroke-width="2.5" />
<g transform="translate(502.2,184.9) scale(0.6038,0.5561)"><path fill="#555555" d="M4.8,0 H7.6 V3.1 H9.3 V19.6 H0 V10.1 H1.4 V6.7 H3.1 V3.1 H4.8 Z M16.4,0 H13.6 V3.1 H11.9 V19.6 H21.2 V10.1 H19.8 V6.7 H18.1 V3.1 H16.4 Z M9.3,8.1 H11.9 V10.4 H9.3 Z"/><path fill="#ffffff" opacity="0.85" d="M0.7,11 H1.7 V18.6 H0.7 Z M3.8,3.8 H4.8 V6.4 H3.8 Z M5.6,0.7 H6.8 V2.6 H5.6 Z M19.5,11 H20.5 V18.6 H19.5 Z M16.8,7.2 H17.8 V9.8 H16.8 Z M14.4,0.7 H15.6 V2.6 H14.4 Z"/></g>
<text x="525.4" y="193.8" font-size="10.3" fill="#444" stroke="#444" stroke-width="0.12" textLength="26.4" lengthAdjust="spacingAndGlyphs">Find...</text>
<line x1="525.4" y1="195.8" x2="531.2032972717662" y2="195.8" stroke="#666" stroke-width="0.8" />
<text x="525.4" y="213.6" font-size="10.3" fill="#444" stroke="#444" stroke-width="0.12" textLength="41.4" lengthAdjust="spacingAndGlyphs">Replace...</text>
<line x1="525.4" y1="215.6" x2="532.0403613308023" y2="215.6" stroke="#666" stroke-width="0.8" />
<text x="525.4" y="233.8" font-size="10.3" fill="#444" stroke="#444" stroke-width="0.12" textLength="33.4" lengthAdjust="spacingAndGlyphs">Go To...</text>
<line x1="525.4" y1="235.8" x2="532.8580953363506" y2="235.8" stroke="#666" stroke-width="0.8" />
<text x="525.4" y="253.5" font-size="10.3" fill="#444" stroke="#444" stroke-width="0.12" textLength="66.1" lengthAdjust="spacingAndGlyphs">Go To Special...</text>
<line x1="552.8850707682202" y1="255.5" x2="559.1467529614358" y2="255.5" stroke="#666" stroke-width="0.8" />
<text x="525.4" y="276" font-size="10.3" fill="#444" stroke="#444" stroke-width="0.12" textLength="41.1" lengthAdjust="spacingAndGlyphs">Formulas</text>
<line x1="548.4083323022934" y1="278" x2="553.8931400227204" y2="278" stroke="#666" stroke-width="0.8" />
<text x="525.4" y="296.1" font-size="10.3" fill="#444" stroke="#444" stroke-width="0.12" textLength="49.1" lengthAdjust="spacingAndGlyphs">Comments</text>
<line x1="538.3829167313062" y1="298.1" x2="546.843164365498" y2="298.1" stroke="#666" stroke-width="0.8" />
<text x="525.4" y="315.9" font-size="10.3" fill="#444" stroke="#444" stroke-width="0.12" textLength="103.6" lengthAdjust="spacingAndGlyphs">Conditional Formatting</text>
<line x1="525.4" y1="317.9" x2="532.8366276893639" y2="317.9" stroke="#666" stroke-width="0.8" />
<text x="525.4" y="335.8" font-size="10.3" fill="#444" stroke="#444" stroke-width="0.12" textLength="44.0" lengthAdjust="spacingAndGlyphs">Constants</text>
<line x1="537.8923982412365" y1="337.8" x2="543.3274076284803" y2="337.8" stroke="#666" stroke-width="0.8" />
<text x="525.4" y="356" font-size="10.3" fill="#444" stroke="#444" stroke-width="0.12" textLength="66.8" lengthAdjust="spacingAndGlyphs">Data Validation</text>
<line x1="549.2014725784097" y1="358" x2="555.843584780406" y2="358" stroke="#666" stroke-width="0.8" />
<text x="525.4" y="377.5" font-size="10.3" fill="#444" stroke="#444" stroke-width="0.12" textLength="61.9" lengthAdjust="spacingAndGlyphs">Select Objects</text>
<line x1="554.7514424684823" y1="379.5" x2="562.219328399083" y2="379.5" stroke="#666" stroke-width="0.8" />
<text x="525.4" y="397.5" font-size="10.3" fill="#444" stroke="#444" stroke-width="0.12" textLength="71.9" lengthAdjust="spacingAndGlyphs">Selection Pane...</text>
<line x1="567.163715985674" y1="399.5" x2="573.506789122029" y2="399.5" stroke="#666" stroke-width="0.8" />
<line x1="526" y1="261.5" x2="646.5" y2="261.5" stroke="#e1e1e1" stroke-width="1" />
<line x1="526" y1="362.5" x2="646.5" y2="362.5" stroke="#e1e1e1" stroke-width="1" />
<text x="501.8" y="210.4" font-size="8.6" fill="#555" textLength="9.6" lengthAdjust="spacingAndGlyphs">ab</text>
<text x="506.4" y="216.9" font-size="8.6" fill="#2e75b6" textLength="9.8" lengthAdjust="spacingAndGlyphs"><tspan fill="#555">a</tspan>c</text>
<path d="M503,211.6 L503,214.2 L505.6,214.2 M504.5,213 L505.7,214.2 L504.5,215.4" fill="none" stroke="#2e75b6" stroke-width="0.8" />
<path d="M504,230.4 L513,230.4 M509.8,227.3 L513,230.4 L509.8,233.5" fill="none" stroke="#2e6bb5" stroke-width="1.8" />
<path d="M506.4,367.6 L506.4,378.2 L508.9,375.8 L510.9,379.6 L512.4,378.9 L510.5,375.2 L513.6,375 Z" fill="#fff" stroke="#555" stroke-width="0.9" stroke-linejoin="round"/>
<path d="M507.6,387.7 L502.9,387.7 L502.9,392.3 L507.6,392.3" fill="none" stroke="#666" stroke-width="0.9" />
<rect x="502.9" y="395.9" width="4.6" height="4.4" fill="none" stroke="#666" stroke-width="0.9" />
<path d="M508.6,394.6 L508.6,389.6 L512.8,389.6 L512.8,391" fill="none" stroke="#eba94a" stroke-width="1" />
<path d="M510.4,390.6 L510.4,399.8 L512.2,398.2 L513.6,400.6 L514.6,400.1 L513.3,397.7 L515.4,397.5 Z" fill="#fff" stroke="#555" stroke-width="0.8" stroke-linejoin="round"/>
</svg></body></html>
